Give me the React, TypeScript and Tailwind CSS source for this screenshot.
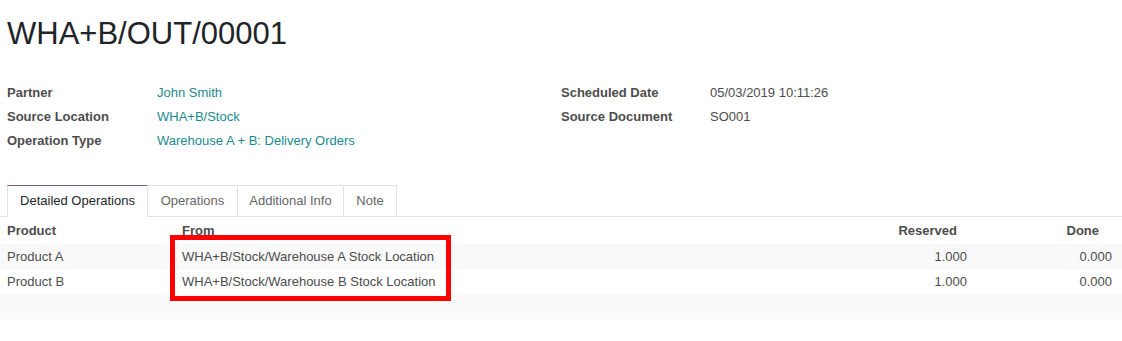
import React from 'react';

const fields = [
  { label: 'Partner', value: 'John Smith', link: true },
  { label: 'Source Location', value: 'WHA+B/Stock', link: true },
  { label: 'Operation Type', value: 'Warehouse A + B: Delivery Orders', link: true },
];

const rightFields = [
  { label: 'Scheduled Date', value: '05/03/2019 10:11:26' },
  { label: 'Source Document', value: 'SO001' },
];

const tabs = [
  { name: 'Detailed Operations', w: 'w-[141px]' },
  { name: 'Operations', w: 'w-[91px]' },
  { name: 'Additional Info', w: 'w-[107px]' },
  { name: 'Note', w: 'w-[54px]' },
];

const lines = [
  { product: 'Product A', from: 'WHA+B/Stock/Warehouse A Stock Location', reserved: '1.000', done: '0.000' },
  { product: 'Product B', from: 'WHA+B/Stock/Warehouse B Stock Location', reserved: '1.000', done: '0.000' },
];

const Field: React.FC<{ label: string; value: string; link?: boolean; labelW: string }> = ({ label, value, link, labelW }) => (
  <div className="flex h-6 items-center">
    <div className={`${labelW} font-bold text-[#4c4c4c]`}>{label}</div>
    <div className={link ? 'text-[#1b8a8f]' : 'text-[#4c4c4c]'}>{value}</div>
  </div>
);

export default function App() {
  return (
    <div
      className="relative w-[1122px] h-[341px] bg-white overflow-hidden text-[13px] text-[#4c4c4c]"
      style={{ fontFamily: '"Liberation Sans", Arial, sans-serif' }}
    >
      <h1 className="pl-[7px] pt-[12px] text-[31px] leading-[44px] text-[#212529]">WHA+B/OUT/00001</h1>

      <div className="flex pl-[7px] mt-[25px]">
        <div className="w-[554px]">
          {fields.map((f) => (
            <Field key={f.label} {...f} labelW="w-[150px]" />
          ))}
        </div>
        <div>
          {rightFields.map((f) => (
            <Field key={f.label} {...f} labelW="w-[149px]" />
          ))}
        </div>
      </div>

      {/* notebook tabs */}
      <div className="mt-[32px] flex border-b border-[#dee2e6] pl-[7px]">
        {tabs.map((t, i) =>
          i === 0 ? (
            <div
              key={t.name}
              className={`${t.w} -mb-px h-[32px] flex items-center justify-center bg-white border border-b-white border-[#dee2e6] border-t-[#7c5b7c] text-[#212529]`}
            >
              {t.name}
            </div>
          ) : (
            <div
              key={t.name}
              className={`${t.w} -ml-px -mb-px h-[32px] flex items-center justify-center border border-[#dee2e6] text-[#666]`}
            >
              {t.name}
            </div>
          )
        )}
      </div>

      {/* lines table */}
      <div className="grid grid-cols-[175px_1fr_120px_145px]">
        <div className="h-[27px] pl-[7px] flex items-center font-bold text-[#4c4c4c]">Product</div>
        <div className="h-[27px] pl-[7px] flex items-center font-bold text-[#4c4c4c]">From</div>
        <div className="h-[27px] pr-[20px] flex items-center justify-end font-bold text-[#4c4c4c]">Reserved</div>
        <div className="h-[27px] pr-[23px] flex items-center justify-end font-bold text-[#4c4c4c]">Done</div>
      </div>
      <div className="shadow-[inset_0_6px_6px_-4px_rgba(0,0,0,0.06)]">
        {lines.map((l, i) => (
          <div
            key={l.product}
            className={`grid grid-cols-[175px_1fr_120px_145px] h-[25px] items-center ${i % 2 === 0 ? 'bg-[#f9f9f9]' : 'bg-white'}`}
          >
            <div className="pl-[7px]">{l.product}</div>
            <div className="pl-[7px]">{l.from}</div>
            <div className="pr-[10px] text-right">{l.reserved}</div>
            <div className="pr-[10px] text-right">{l.done}</div>
          </div>
        ))}
        <div className="h-[25px] bg-[#fafafa]" />
      </div>

      {/* annotation */}
      <div className="absolute left-[170px] top-[235px] w-[281px] h-[66px] border-[5px] border-[#ff0000]" />
    </div>
  );
}
